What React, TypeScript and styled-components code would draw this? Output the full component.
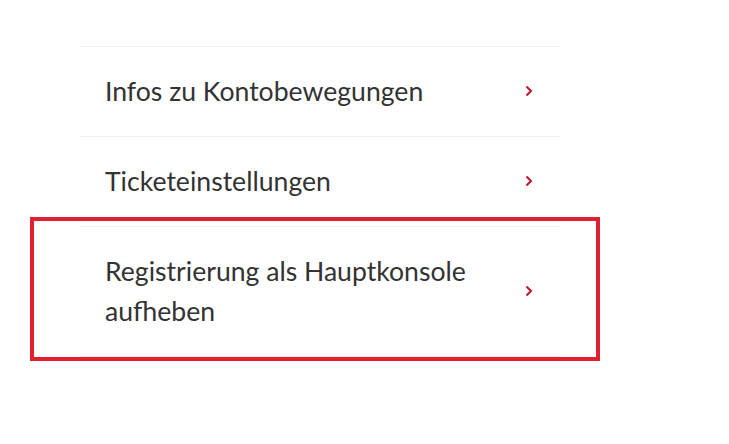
import React from "react";
import styled, { createGlobalStyle } from "styled-components";

const Global = createGlobalStyle`
  html, body { margin: 0; padding: 0; background: #ffffff; }
  body { font-family: Lato, "Open Sans", sans-serif; }
`;

const Page = styled.div`
  width: 729px;
  height: 444px;
  padding: 46px 0 0 80px;
  box-sizing: border-box;
`;

const List = styled.ul`
  list-style: none;
  margin: 0;
  padding: 0;
  width: 480px;
  border-top: 1px solid #f0f0f0;
`;

const Row = styled.li<{ $highlight?: boolean }>`
  position: relative;
  display: flex;
  align-items: center;
  justify-content: space-between;
  padding: 24px 27px 25px 25px;
  border-bottom: 1px solid #f0f0f0;
  &::after {
    content: "";
    display: ${(p) => (p.$highlight ? "block" : "none")};
    position: absolute;
    left: -50px;
    right: -40px;
    top: -10px;
    bottom: -5px;
    border: 4px solid #e0212f;
    pointer-events: none;
  }
`;

const Label = styled.span`
  font-size: 26.6px;
  line-height: 40px;
  color: #333333;
  max-width: 400px;
`;

const Chevron = () => (
  <svg width="8" height="12" viewBox="0 0 8 12" aria-hidden="true">
    <polyline points="1.5,1.5 6,6 1.5,10.5" fill="none" stroke="#c8102e" strokeWidth="2" />
  </svg>
);

const items = [
  { label: "Infos zu Kontobewegungen" },
  { label: "Ticketeinstellungen" },
  { label: "Registrierung als Hauptkonsole aufheben", highlight: true },
];

export default function App() {
  return (
    <>
      <Global />
      <Page>
        <List>
          {items.map((it) => (
            <Row key={it.label} $highlight={it.highlight}>
              <Label>{it.label}</Label>
              <Chevron />
            </Row>
          ))}
        </List>
      </Page>
    </>
  );
}
